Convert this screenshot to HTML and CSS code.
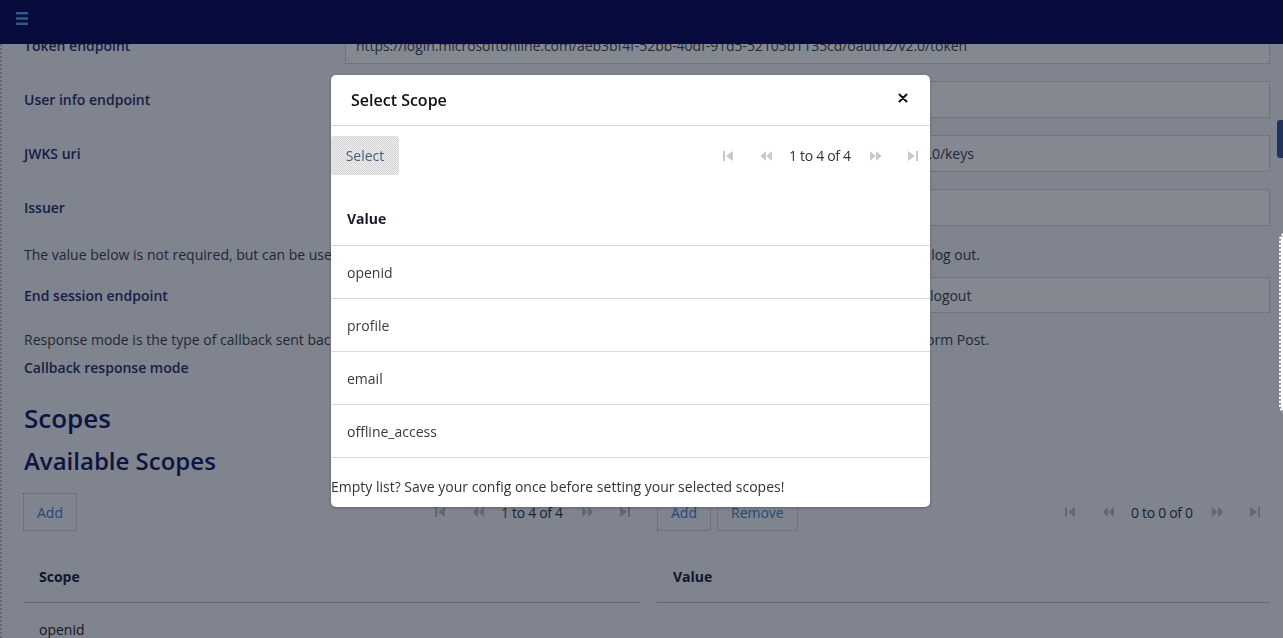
FILE: index.html
```html
<!DOCTYPE html>
<html lang="en">
<head>
<meta charset="utf-8">
<title>Select Scope</title>
<link rel="stylesheet" href="styles.css">
</head>
<body>
<header class="topbar">
  <button class="menu-btn" aria-label="Menu">
    <svg width="12" height="13" viewBox="0 0 12 13"><rect x="0" y="0" width="12" height="2.4" fill="#2f5b8e"/><rect x="0" y="5.3" width="12" height="2.4" fill="#2f5b8e"/><rect x="0" y="10.6" width="12" height="2.4" fill="#2f5b8e"/></svg>
  </button>
</header>

<main class="page">
  <section class="form">
    <div class="field-row">
      <label class="field-label">Token endpoint</label>
      <div class="field-input">https://login.microsoftonline.com/aeb3bf4f-52bb-40df-91d5-52105b1135cd/oauth2/v2.0/token</div>
    </div>
    <div class="field-row">
      <label class="field-label">User info endpoint</label>
      <div class="field-input">https://graph.microsoft.com/oidc/userinfo</div>
    </div>
    <div class="field-row">
      <label class="field-label">JWKS uri</label>
      <div class="field-input">https://login.microsoftonline.com/aeb3bf4f-52bb-40df-91d5-52105b1135cd/discovery/v2.0/keys</div>
    </div>
    <div class="field-row">
      <label class="field-label">Issuer</label>
      <div class="field-input">https://login.microsoftonline.com/aeb3bf4f-52bb-40df-91d5-52105b1135cd/v2.0</div>
    </div>
    <p class="hint hint-first">The value below is not required, but can be used to also sign the user out of their active session at the external identity provider when they log out.</p>
    <div class="field-row field-row-tight">
      <label class="field-label">End session endpoint</label>
      <div class="field-input">https://login.microsoftonline.com/aeb3bf4f-52bb-40df-91d5-52105b1135cd/oauth2/v2.0/logout</div>
    </div>
    <p class="hint hint-second">Response mode is the type of callback sent back to your application after the users have logged in. The default is Query, the alternative is Form Post.</p>
    <div class="label-only">Callback response mode</div>
  </section>

  <h2 class="title-scopes">Scopes</h2>
  <h3 class="title-available">Available Scopes</h3>

  <section class="grids">
    <div class="grid">
      <div class="grid-toolbar">
        <div class="btn-group">
          <button class="tool-btn">Add</button>
        </div>
        <div class="pager pager-bg">
          <span class="pg-icon pg-first"><svg width="12" height="12" viewBox="0 0 12 12"><rect x="1" y="1" width="2" height="10"/><path d="M11 1 L4 6 L11 11 Z"/></svg></span>
          <span class="pg-icon pg-prev"><svg width="12" height="12" viewBox="0 0 12 12"><path d="M6 1 L0.5 6 L6 11 Z"/><path d="M12 1 L6.5 6 L12 11 Z"/></svg></span>
          <span class="pg-text"><span class="pg-num">1</span> to 4 of 4</span>
          <span class="pg-icon pg-next"><svg width="12" height="12" viewBox="0 0 12 12"><path d="M0 1 L5.5 6 L0 11 Z"/><path d="M6 1 L11.5 6 L6 11 Z"/></svg></span>
          <span class="pg-icon pg-last"><svg width="12" height="12" viewBox="0 0 12 12"><path d="M1 1 L8 6 L1 11 Z"/><rect x="9" y="1" width="2" height="10"/></svg></span>
        </div>
      </div>
      <div class="grid-head">Scope</div>
      <div class="grid-row">openid</div>
    </div>
    <div class="grid">
      <div class="grid-toolbar">
        <div class="btn-group">
          <button class="tool-btn">Add</button>
          <button class="tool-btn">Remove</button>
        </div>
        <div class="pager pager-bg">
          <span class="pg-icon pg-first"><svg width="12" height="12" viewBox="0 0 12 12"><rect x="1" y="1" width="2" height="10"/><path d="M11 1 L4 6 L11 11 Z"/></svg></span>
          <span class="pg-icon pg-prev"><svg width="12" height="12" viewBox="0 0 12 12"><path d="M6 1 L0.5 6 L6 11 Z"/><path d="M12 1 L6.5 6 L12 11 Z"/></svg></span>
          <span class="pg-text">0 to 0 of 0</span>
          <span class="pg-icon pg-next"><svg width="12" height="12" viewBox="0 0 12 12"><path d="M0 1 L5.5 6 L0 11 Z"/><path d="M6 1 L11.5 6 L6 11 Z"/></svg></span>
          <span class="pg-icon pg-last"><svg width="12" height="12" viewBox="0 0 12 12"><path d="M1 1 L8 6 L1 11 Z"/><rect x="9" y="1" width="2" height="10"/></svg></span>
        </div>
      </div>
      <div class="grid-head">Value</div>
      <div class="grid-row"></div>
    </div>
  </section>

  <div class="side-tab"></div>
</main>

<div class="backdrop"></div>
<div class="side-panel"></div>

<div class="modal" role="dialog" aria-label="Select Scope">
  <div class="modal-header">
    <h4 class="modal-title">Select Scope</h4>
    <button class="modal-close" aria-label="Close">
      <svg width="10" height="10" viewBox="0 0 10 10"><path d="M1.5 1.5 L8.5 8.5 M8.5 1.5 L1.5 8.5" stroke="#111" stroke-width="2" stroke-linecap="round"/></svg>
    </button>
  </div>
  <div class="modal-toolbar">
    <button class="select-btn">Select</button>
    <div class="pager pager-modal">
      <span class="pg-icon pg-first"><svg width="12" height="12" viewBox="0 0 12 12"><rect x="1" y="1" width="2" height="10"/><path d="M11 1 L4 6 L11 11 Z"/></svg></span>
      <span class="pg-icon pg-prev"><svg width="12" height="12" viewBox="0 0 12 12"><path d="M6 1 L0.5 6 L6 11 Z"/><path d="M12 1 L6.5 6 L12 11 Z"/></svg></span>
      <span class="pg-text">1 to 4 of 4</span>
      <span class="pg-icon pg-next"><svg width="12" height="12" viewBox="0 0 12 12"><path d="M0 1 L5.5 6 L0 11 Z"/><path d="M6 1 L11.5 6 L6 11 Z"/></svg></span>
      <span class="pg-icon pg-last"><svg width="12" height="12" viewBox="0 0 12 12"><path d="M1 1 L8 6 L1 11 Z"/><rect x="9" y="1" width="2" height="10"/></svg></span>
    </div>
  </div>
  <div class="modal-grid">
    <div class="m-head">Value</div>
    <div class="m-row">openid</div>
    <div class="m-row">profile</div>
    <div class="m-row">email</div>
    <div class="m-row">offline_access</div>
  </div>
  <p class="modal-note">Empty list? Save your config once before setting your selected scopes!</p>
</div>
</body>
</html>
```

FILE: styles.css
```css
* { box-sizing: border-box; }

html, body {
  margin: 0;
  padding: 0;
  height: 100%;
  overflow: hidden;
}

body {
  font-family: "Open Sans", "Noto Sans", sans-serif;
  font-size: 14px;
  color: #333;
  background: #f5f6f8;
}

button {
  font-family: inherit;
  font-size: 14px;
  background: none;
  border: 0;
  padding: 0;
  cursor: pointer;
}

/* top bar */
.topbar {
  position: fixed;
  top: 0;
  left: 0;
  right: 0;
  height: 44px;
  background: #070c3c;
  z-index: 30;
  display: flex;
  align-items: flex-start;
  padding: 12px 0 0 16px;
}
.menu-btn { display: block; line-height: 0; }

/* page */
.page {
  position: relative;
  height: 100%;
  padding: 27px 13px 0 22px;
  border-left: 2px dotted #b9bcc4;
}

.form {
  display: flex;
  flex-direction: column;
}

.field-row {
  display: grid;
  grid-template-columns: 321px 1fr;
  align-items: center;
  height: 37px;
  margin-bottom: 17px;
}
.field-row-tight { margin-bottom: 0; height: 36px; }

.field-label {
  font-weight: 600;
  color: #262d6a;
}

.field-input {
  height: 100%;
  border: 1px dotted #a9adb5;
  background: #fff;
  padding: 0 10px;
  display: flex;
  align-items: center;
  white-space: nowrap;
  overflow: hidden;
  color: #3a3f4a;
  letter-spacing: -0.05px;
}

.hint {
  margin: 0;
  line-height: 20px;
  color: #383c48;
  white-space: nowrap;
}
.hint-first { margin-top: 2px; margin-bottom: 12px; }
.hint-second { margin-top: 17px; }

.label-only {
  margin-top: 8px;
  line-height: 20px;
  font-weight: 600;
  color: #262d6a;
}

.title-scopes {
  margin: 23px 0 0;
  font-size: 26px;
  line-height: 34px;
  font-weight: 600;
  color: #0f1660;
}
.title-available {
  margin: 11px 0 0;
  font-size: 24px;
  line-height: 30px;
  font-weight: 600;
  color: #0f1660;
}

/* grids */
.grids {
  display: grid;
  grid-template-columns: 617px 613px;
  column-gap: 17px;
  margin-top: 17px;
  margin-left: -1px;
}
.grid-toolbar {
  display: flex;
  justify-content: space-between;
  align-items: center;
  height: 38px;
}
.btn-group { display: flex; gap: 6px; height: 100%; }
.tool-btn {
  height: 100%;
  padding: 0 13px;
  border: 1px dotted #a9adb5;
  color: #3e7fd0;
}

.pager {
  display: flex;
  align-items: center;
  color: #333;
}
.pg-icon { display: flex; width: 14px; justify-content: center; }
.pg-icon svg { fill: #c9c9c9; }
.pg-first { margin-right: 24px; }
.pg-prev { margin-right: 16px; }
.pg-text { margin-right: 15px; width: 65px; white-space: nowrap; font-size: 14px; letter-spacing: -0.3px; }
.pg-next { margin-right: 23px; }
.pager-bg { padding-right: 8px; }
.pager-bg .pg-icon svg { fill: #b8bcc4; }
.pg-num { color: #8a3a1a; }

.grid-head {
  margin-top: 19px;
  height: 53px;
  padding-left: 16px;
  display: flex;
  align-items: center;
  font-weight: 700;
  color: #151a3a;
  border-bottom: 1px solid #b9bdc6;
}
.grid-row {
  height: 53px;
  padding-left: 16px;
  display: flex;
  align-items: center;
  color: #222;
}

.side-tab {
  position: absolute;
  right: 0;
  top: 120px;
  width: 6px;
  height: 38px;
  border-radius: 3px 0 0 3px;
  background: #3553a8;
}

/* overlay */
.backdrop {
  position: fixed;
  inset: 0;
  background: rgba(10, 17, 35, 0.5);
  z-index: 10;
}

.side-panel {
  position: fixed;
  left: 1279px;
  top: 232px;
  width: 20px;
  height: 182px;
  background: #fff;
  border: 2px dotted #8d9199;
  border-radius: 8px;
  z-index: 20;
}

/* modal */
.modal {
  position: fixed;
  left: 331px;
  top: 75px;
  width: 599px;
  height: 432px;
  background: #fff;
  border-radius: 5px;
  box-shadow: 0 1px 3px rgba(0,0,0,0.25);
  z-index: 20;
  display: flex;
  flex-direction: column;
}
.modal-header {
  height: 51px;
  border-bottom: 1px solid #dadada;
  display: flex;
  align-items: center;
  justify-content: space-between;
  padding: 0 22px 0 20px;
}
.modal-title {
  margin: 0;
  font-size: 16px;
  font-weight: 600;
  color: #111;
}
.modal-close { line-height: 0; margin-bottom: 4px; }

.modal-toolbar {
  margin-top: 10px;
  height: 39px;
  display: flex;
  justify-content: space-between;
  align-items: center;
}
.select-btn {
  height: 100%;
  width: 68px;
  border-radius: 3px;
  color: #4a5c7c;
  background-color: #e3e3e3;
  background-image: repeating-conic-gradient(#d6d6d6 0 25%, #ececec 0 50%);
  background-size: 2px 2px;
}
.pager-modal { padding-right: 10px; }

.modal-grid { margin-top: 17px; }
.m-head {
  height: 54px;
  padding-left: 16px;
  display: flex;
  align-items: center;
  font-weight: 700;
  color: #151a2e;
  border-bottom: 1px solid #dadada;
}
.m-row {
  height: 53px;
  padding-left: 16px;
  display: flex;
  align-items: center;
  color: #3a3a3a;
  border-bottom: 1px solid #dadada;
}

.modal-note {
  margin: 19px 0 0;
  line-height: 20px;
  color: #333;
}
```
